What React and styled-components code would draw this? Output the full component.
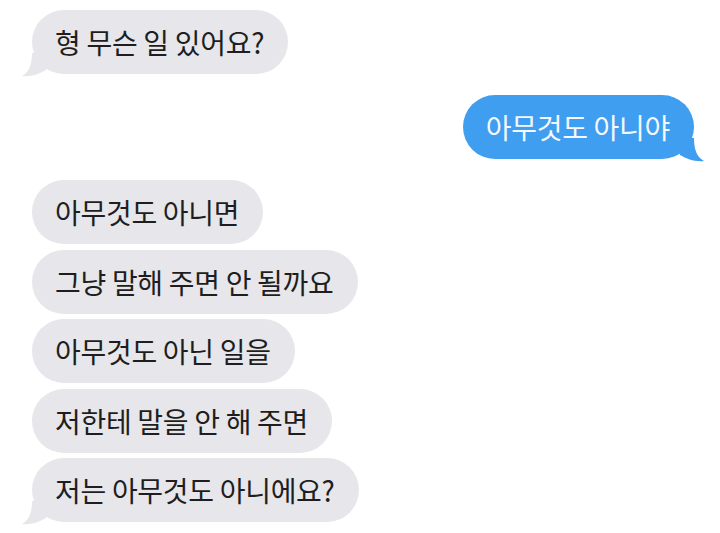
import React from 'react';
import styled, { createGlobalStyle } from 'styled-components';

const GlobalStyle = createGlobalStyle`
  html, body {
    margin: 0;
    padding: 0;
    background: #fff;
  }
`;

const Thread = styled.div`
  width: 720px;
  height: 533px;
  overflow: hidden;
  box-sizing: border-box;
  padding: 10px 26px 0 32px;
  display: flex;
  flex-direction: column;
  font-family: 'Noto Sans CJK KR', 'Noto Sans', sans-serif;
`;

const Group = styled.div`
  display: flex;
  flex-direction: column;
  align-items: ${(p) => (p.$mine ? 'flex-end' : 'flex-start')};
  gap: 5.5px;
  margin-top: ${(p) => p.$top || 0}px;
`;

const Bubble = styled.div`
  position: relative;
  height: 64px;
  box-sizing: border-box;
  padding: 0 24px 0 23px;
  display: flex;
  align-items: center;
  border-radius: 32px;
  font-size: 28px;
  letter-spacing: -0.3px;
  white-space: nowrap;
  background: ${(p) => (p.$mine ? '#3f9ef0' : '#e6e6eb')};
  color: ${(p) => (p.$mine ? '#f4f9ff' : '#1e1e20')};
`;

const Tail = styled.svg`
  position: absolute;
  bottom: -3px;
  ${(p) => (p.$mine ? 'right: -10px; transform: scaleX(-1);' : 'left: -10px;')}
`;

const BubbleTail = ({ mine }) => (
  <Tail $mine={mine} width="26" height="24" viewBox="0 0 26 24">
    <path
      d="M10 0 C10 12 7 19 0 23 C9 24 17 21 24 17 L24 0 Z"
      fill={mine ? '#3f9ef0' : '#e6e6eb'}
    />
  </Tail>
);

const Message = ({ text, mine, tail }) => (
  <Bubble $mine={mine}>
    {text}
    {tail && <BubbleTail mine={mine} />}
  </Bubble>
);

const App = () => (
  <>
    <GlobalStyle />
    <Thread>
      <Group>
        <Message text="형 무슨 일 있어요?" tail />
      </Group>
      <Group $mine $top={21}>
        <Message text="아무것도 아니야" mine tail />
      </Group>
      <Group $top={21}>
        <Message text="아무것도 아니면" />
        <Message text="그냥 말해 주면 안 될까요" />
        <Message text="아무것도 아닌 일을" />
        <Message text="저한테 말을 안 해 주면" />
        <Message text="저는 아무것도 아니에요?" tail />
      </Group>
    </Thread>
  </>
);

export default App;
